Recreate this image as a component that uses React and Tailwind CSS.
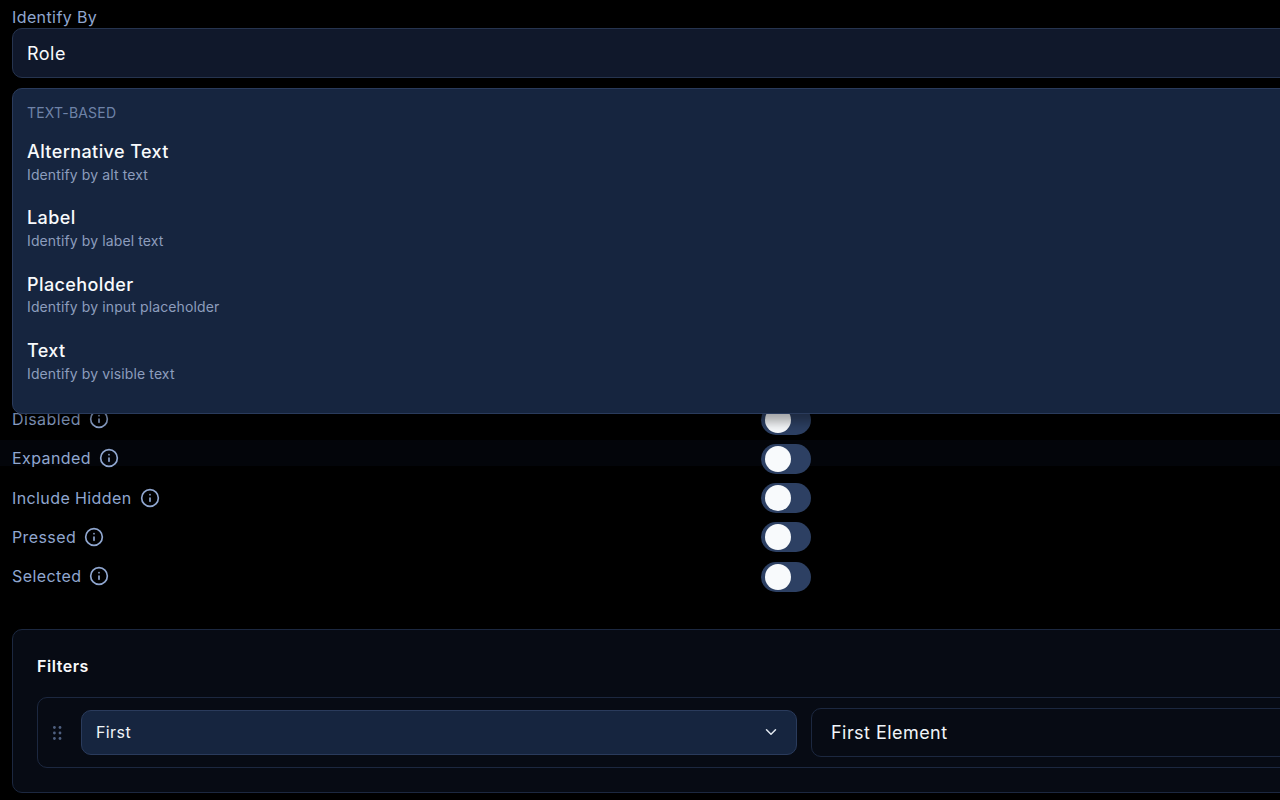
import React from "react";
import { ChevronDown, Info } from "lucide-react";

const options = [
  { title: "Alternative Text", desc: "Identify by alt text" },
  { title: "Label", desc: "Identify by label text" },
  { title: "Placeholder", desc: "Identify by input placeholder" },
  { title: "Text", desc: "Identify by visible text" },
];

const toggles = ["Disabled", "Expanded", "Include Hidden", "Pressed", "Selected"];

const ToggleRow = ({ label }) => (
  <div className="relative flex h-[39.25px] items-center">
    {label === "Expanded" && <div className="absolute -left-3 right-0 top-[1px] h-[26px] bg-[#03050a]" />}
    <div className="relative flex w-[749px] items-center gap-2 pb-[1px]">
      <span className="text-base leading-6 tracking-[0.4px] text-[#90a7d0]">{label}</span>
      <Info className="h-5 w-5 text-[#90a7d0]" strokeWidth={2} />
    </div>
    <div className="relative flex h-[30px] w-[50px] items-center rounded-full bg-[#2d4063] pl-[4px]">
      <div className="h-[26px] w-[26px] rounded-full bg-[#f8fafc]" />
    </div>
  </div>
);

const Grip = () => (
  <svg width="9" height="14" viewBox="0 0 9 14" fill="#4f6080" className="shrink-0">
    <circle cx="1.4" cy="1.5" r="1.4" />
    <circle cx="7" cy="1.5" r="1.4" />
    <circle cx="1.4" cy="7" r="1.4" />
    <circle cx="7" cy="7" r="1.4" />
    <circle cx="1.4" cy="12.5" r="1.4" />
    <circle cx="7" cy="12.5" r="1.4" />
  </svg>
);

export default function App() {
  return (
    <div className="h-[800px] w-[1280px] overflow-hidden bg-black font-['Inter',sans-serif]">
      <div className="w-[1600px] pl-3">
        <div className="relative">
          <div className="-mb-[1px] pt-[5px] text-base leading-6 tracking-[0.4px] text-[#90a7d0]">Identify By</div>
          <div className="flex h-[50px] items-center rounded-[10px] border border-[#26344f] bg-[#10182b] px-[14px] pt-[2px] text-lg tracking-[0.5px] text-[#f8fafc]">
            Role
          </div>

          <div className="absolute left-0 right-0 top-[88px] z-10 h-[326px] rounded-[10px] border border-[#2a3b5c] bg-[#16253f] px-[14px] pt-[14px] shadow-[0_8px_12px_rgba(0,0,0,0.35)]">
            <div className="text-sm leading-5 tracking-[0.2px] text-[#6f83a8]">TEXT-BASED</div>
            <div className="mt-[15px] flex flex-col gap-[19.9px]">
              {options.map((opt) => (
                <div key={opt.title}>
                  <div className="text-lg font-[450] leading-7 tracking-[0.4px] text-[#f8fafc]">{opt.title}</div>
                  <div className="-mt-[1.5px] text-sm leading-5 tracking-[0.12px] text-[#8d9dbd]">{opt.desc}</div>
                </div>
              ))}
            </div>
          </div>
        </div>

        <div className="h-[322px]" />

        {toggles.map((t) => (
          <ToggleRow key={t} label={t} />
        ))}

        <div className="mt-[33px] h-[164px] rounded-[10px] border border-[#1c2840] bg-[#070b14] px-6 pt-6">
          <div className="text-base font-semibold leading-6 tracking-[0.55px] text-[#f8fafc]">Filters</div>
          <div className="mt-[19px] flex h-[71px] items-center rounded-[10px] border border-[#1c2840] pl-[15px] pr-3">
            <Grip />
            <div className="ml-[19px] flex h-[45px] w-[716px] items-center justify-between rounded-[10px] border border-[#2a3b5c] bg-[#16253f] pl-[14px] pr-4 pb-[1px] text-base tracking-[0.4px] text-[#f1f5f9]">
              First
              <ChevronDown className="h-[18px] w-[18px] text-[#e2e8f0]" strokeWidth={2} />
            </div>
            <div className="ml-[14px] flex h-[49px] flex-1 items-center rounded-[10px] border border-[#1c2840] pl-[19px] pr-5 text-lg tracking-[0.45px] text-[#f1f5f9]">
              First Element
            </div>
          </div>
        </div>
      </div>
    </div>
  );
}
